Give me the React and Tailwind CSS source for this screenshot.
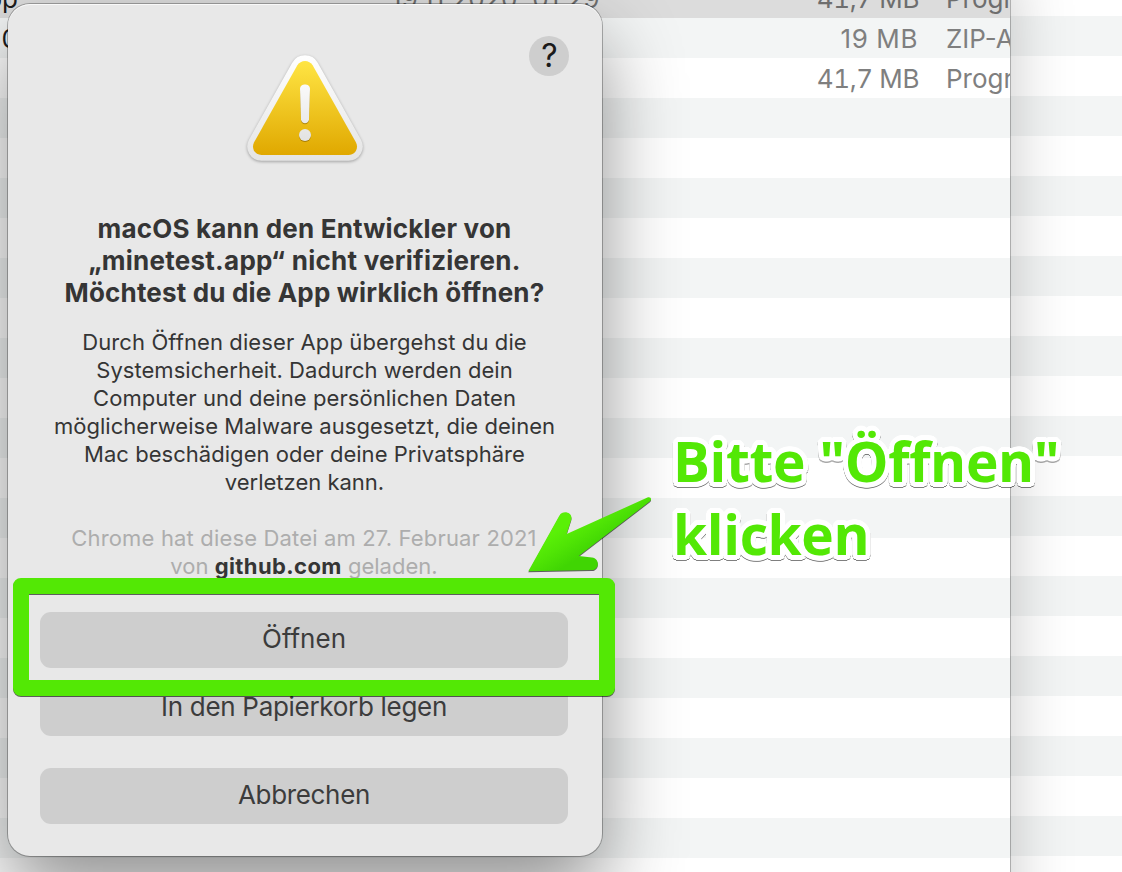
const HEADLINE = [
  { text: "macOS kann den Entwickler von", className: "tracking-[0.19px]" },
  { text: "„minetest.app“ nicht verifizieren.", className: "tracking-[0.25px]" },
  { text: "Möchtest du die App wirklich öffnen?", className: "tracking-[0.17px]" },
];

const BODY = [
  { text: "Durch Öffnen dieser App übergehst du die", className: "tracking-[0.1px]" },
  { text: "Systemsicherheit. Dadurch werden dein", className: "tracking-[0.045px]" },
  { text: "Computer und deine persönlichen Daten", className: "tracking-[0.075px]" },
  { text: "möglicherweise Malware ausgesetzt, die deinen", className: "tracking-[0.03px]" },
  { text: "Mac beschädigen oder deine Privatsphäre", className: "tracking-[0.035px]" },
  { text: "verletzen kann.", className: "" },
];

const FILES = [
  {
    name: "app",
    date: "19.11.2020, 01:29",
    size: "41,7 MB",
    sizeClass: "tabular-nums tracking-[-0.4px] pr-[1px]",
    kind: "Programm",
    row: "bg-[#dcdcdc] text-[#6e6e6e]",
  },
  {
    name: "0",
    date: "",
    size: "19 MB",
    sizeClass: "tracking-[0.6px] pr-[2px]",
    kind: "ZIP-Archiv",
    row: "bg-[#f3f5f5] text-[#7f7f7f]",
  },
  {
    name: "",
    date: "",
    size: "41,7 MB",
    sizeClass: "tabular-nums tracking-[-0.4px] pr-[1px]",
    kind: "Programm",
    row: "bg-white text-[#7f7f7f]",
  },
];

const EMPTY_ROWS = Array.from({ length: 20 }, (_, i) => i);
const BACK_ROWS = Array.from({ length: 22 }, (_, i) => i);

function FileRow({ file }) {
  return (
    <div className={`flex h-10 shrink-0 items-center pt-[2px] text-[26px] leading-none whitespace-nowrap ${file.row}`}>
      <div className="flex w-[18px] shrink-0 justify-end text-[#1c1c1c]">{file.name}</div>
      <div className="ml-[373px] w-[221px] shrink-0 tracking-[0.22px]">{file.date}</div>
      <div className={`w-[308px] shrink-0 text-right ${file.sizeClass}`}>{file.size}</div>
      <div className="ml-[26px] shrink-0">{file.kind}</div>
    </div>
  );
}

function WarningIcon() {
  const outline =
    "M297.2 65.5 C300.7 59.5 309.3 59.5 312.8 65.5 L355.9 142.2 C359 148 355.3 155 348.5 155 L261.5 155 C254.7 155 251 148 254.1 142.2 Z";
  return (
    <svg className="h-[125px] w-[130px]" viewBox="240 45 130 125">
      <defs>
        <linearGradient id="frame" x1="0" y1="55" x2="0" y2="161" gradientUnits="userSpaceOnUse">
          <stop offset="0" stopColor="#ffffff" />
          <stop offset="1" stopColor="#e4e4e4" />
        </linearGradient>
        <linearGradient id="yellow" x1="0" y1="61" x2="0" y2="155" gradientUnits="userSpaceOnUse">
          <stop offset="0" stopColor="#ffe544" />
          <stop offset="1" stopColor="#e0a800" />
        </linearGradient>
        <linearGradient id="mark" x1="0" y1="84" x2="0" y2="142" gradientUnits="userSpaceOnUse">
          <stop offset="0" stopColor="#fafafa" />
          <stop offset="1" stopColor="#e2e2e2" />
        </linearGradient>
      </defs>
      <path
        d={outline}
        fill="url(#frame)"
        stroke="url(#frame)"
        strokeWidth="11.4"
        strokeLinejoin="round"
        className="drop-shadow-[0_1px_1.5px_rgba(0,0,0,0.32)]"
      />
      <path d={outline} fill="url(#yellow)" />
      <g fill="url(#mark)" className="drop-shadow-[0_1px_0.5px_rgba(110,75,0,0.5)]">
        <path d="M300 88.8 C300 83.2 310 83.2 310 88.8 L309 119.6 C308.6 124.4 301.4 124.4 301 119.6 Z" />
        <circle cx="305" cy="135" r="6" />
      </g>
    </svg>
  );
}

function DialogButton({ className, children }) {
  return (
    <button
      className={`flex h-14 w-full shrink-0 items-center justify-center rounded-[11px] bg-[#cecece] pb-[2px] text-[26px] leading-none text-[#3c3c3c] ${className}`}
    >
      {children}
    </button>
  );
}

function Dialog() {
  return (
    <div className="absolute top-[4px] left-[8px] flex h-[852px] w-[594px] flex-col items-center rounded-[22px] bg-[#e8e8e8] pr-[34px] pl-8 text-center text-[#353535] shadow-[0_0_0_1px_rgba(0,0,0,0.28),0_36px_80px_rgba(0,0,0,0.44),inset_0_1px_0_rgba(255,255,255,0.75)]">
      <button className="absolute top-[32px] right-[33px] flex size-10 items-center justify-center rounded-full bg-[#cecece] pl-[1px] text-[32px] leading-none font-normal text-[#1a1a1a]">
        ?
      </button>
      <div className="mt-[41px] ml-[2px] flex">
        <WarningIcon />
      </div>
      <h1 className="mt-[43px] ml-[1px] text-[26px] leading-8 font-bold whitespace-nowrap">
        {HEADLINE.map((line) => (
          <span key={line.text} className={`block ${line.className}`}>
            {line.text}
          </span>
        ))}
      </h1>
      <p className="mt-[19px] ml-[1px] text-[22px] leading-7 whitespace-nowrap">
        {BODY.map((line) => (
          <span key={line.text} className={`block ${line.className}`}>
            {line.text}
          </span>
        ))}
      </p>
      <p className="mt-[28px] text-[22px] leading-7 whitespace-nowrap text-[#adadad]">
        <span className="block tracking-[0.16px]">Chrome hat diese Datei am 27. Februar 2021</span>
        <span className="block">
          von <b className="font-bold tracking-[0.4px] text-[#353535]">github.com</b> geladen.
        </span>
      </p>
      <DialogButton className="mt-8">Öffnen</DialogButton>
      <DialogButton className="mt-3 tracking-[-0.3px]">In den Papierkorb legen</DialogButton>
      <DialogButton className="mt-8 tracking-[-0.33px]">Abbrechen</DialogButton>
    </div>
  );
}

function Arrow() {
  return (
    <svg
      className="absolute top-[490px] left-[520px] h-[90px] w-[140px] drop-shadow-[0_1px_0.5px_rgba(0,0,0,0.6)]"
      viewBox="520 490 140 90"
    >
      <defs>
        <linearGradient id="arrow" x1="572" y1="522" x2="590" y2="551" gradientUnits="userSpaceOnUse">
          <stop offset="0" stopColor="#5af007" />
          <stop offset="0.45" stopColor="#50e505" />
          <stop offset="1" stopColor="#40d503" />
        </linearGradient>
      </defs>
      <path
        fill="url(#arrow)"
        d="M528.3 571.3 L559.3 515.7 C563 509.5 573 512.5 571.3 519.5 L566.7 534 L648 497.3 C650.5 496.5 652.3 499.3 650 501.3 L578.7 556 L592 557.5 C600 558.7 599.5 569.6 592 570 Z"
      />
    </svg>
  );
}

export default function App() {
  return (
    <div className="relative h-[872px] w-[1122px] overflow-hidden bg-white font-['Inter',sans-serif]">
      <div className="absolute inset-0 flex flex-col overflow-hidden pt-[16px]">
        {BACK_ROWS.map((i) => (
          <div key={i} className="h-10 shrink-0 odd:bg-[#f3f5f5] even:bg-white" />
        ))}
      </div>

      <div className="absolute top-[-60px] left-0 h-[1000px] w-[1010px] overflow-visible bg-white shadow-[0_0_0_1px_rgba(0,0,0,0.24),0_30px_60px_rgba(0,0,0,0.22)]">
        <div className="flex h-full flex-col overflow-hidden pt-[38px]">
          {FILES.map((file, i) => (
            <FileRow key={i} file={file} />
          ))}
          {EMPTY_ROWS.map((i) => (
            <div
              key={i}
              className={`h-10 shrink-0 ${i % 2 === 0 ? "bg-[#f3f5f5]" : "bg-white"}`}
            />
          ))}
        </div>
      </div>

      <Dialog />

      <div className="absolute top-[578px] left-[13px] h-[118px] w-[602px] rounded-[8px] border-16 border-[#53e805] drop-shadow-[0_1px_0.3px_rgba(0,0,0,0.6)]" />

      <Arrow />

      <p className="absolute top-[424px] left-[673px] font-['Open_Sans',sans-serif] text-[55px] leading-[73px] font-bold tracking-[-0.35px] whitespace-nowrap text-[#53e805] drop-shadow-[0_1px_0.5px_rgba(0,0,0,0.5)] [text-shadow:5px_0_white,4.8px_1.3px_white,4.3px_2.5px_white,3.5px_3.5px_white,2.5px_4.3px_white,1.3px_4.8px_white,0_5px_white,-1.3px_4.8px_white,-2.5px_4.3px_white,-3.5px_3.5px_white,-4.3px_2.5px_white,-4.8px_1.3px_white,-5px_0_white,-4.8px_-1.3px_white,-4.3px_-2.5px_white,-3.5px_-3.5px_white,-2.5px_-4.3px_white,-1.3px_-4.8px_white,0_-5px_white,1.3px_-4.8px_white,2.5px_-4.3px_white,3.5px_-3.5px_white,4.3px_-2.5px_white,4.8px_-1.3px_white,2.5px_0_white,-2.5px_0_white,0_2.5px_white,0_-2.5px_white]">
        Bitte "Öffnen"
        <br />
        klicken
      </p>
    </div>
  );
}
